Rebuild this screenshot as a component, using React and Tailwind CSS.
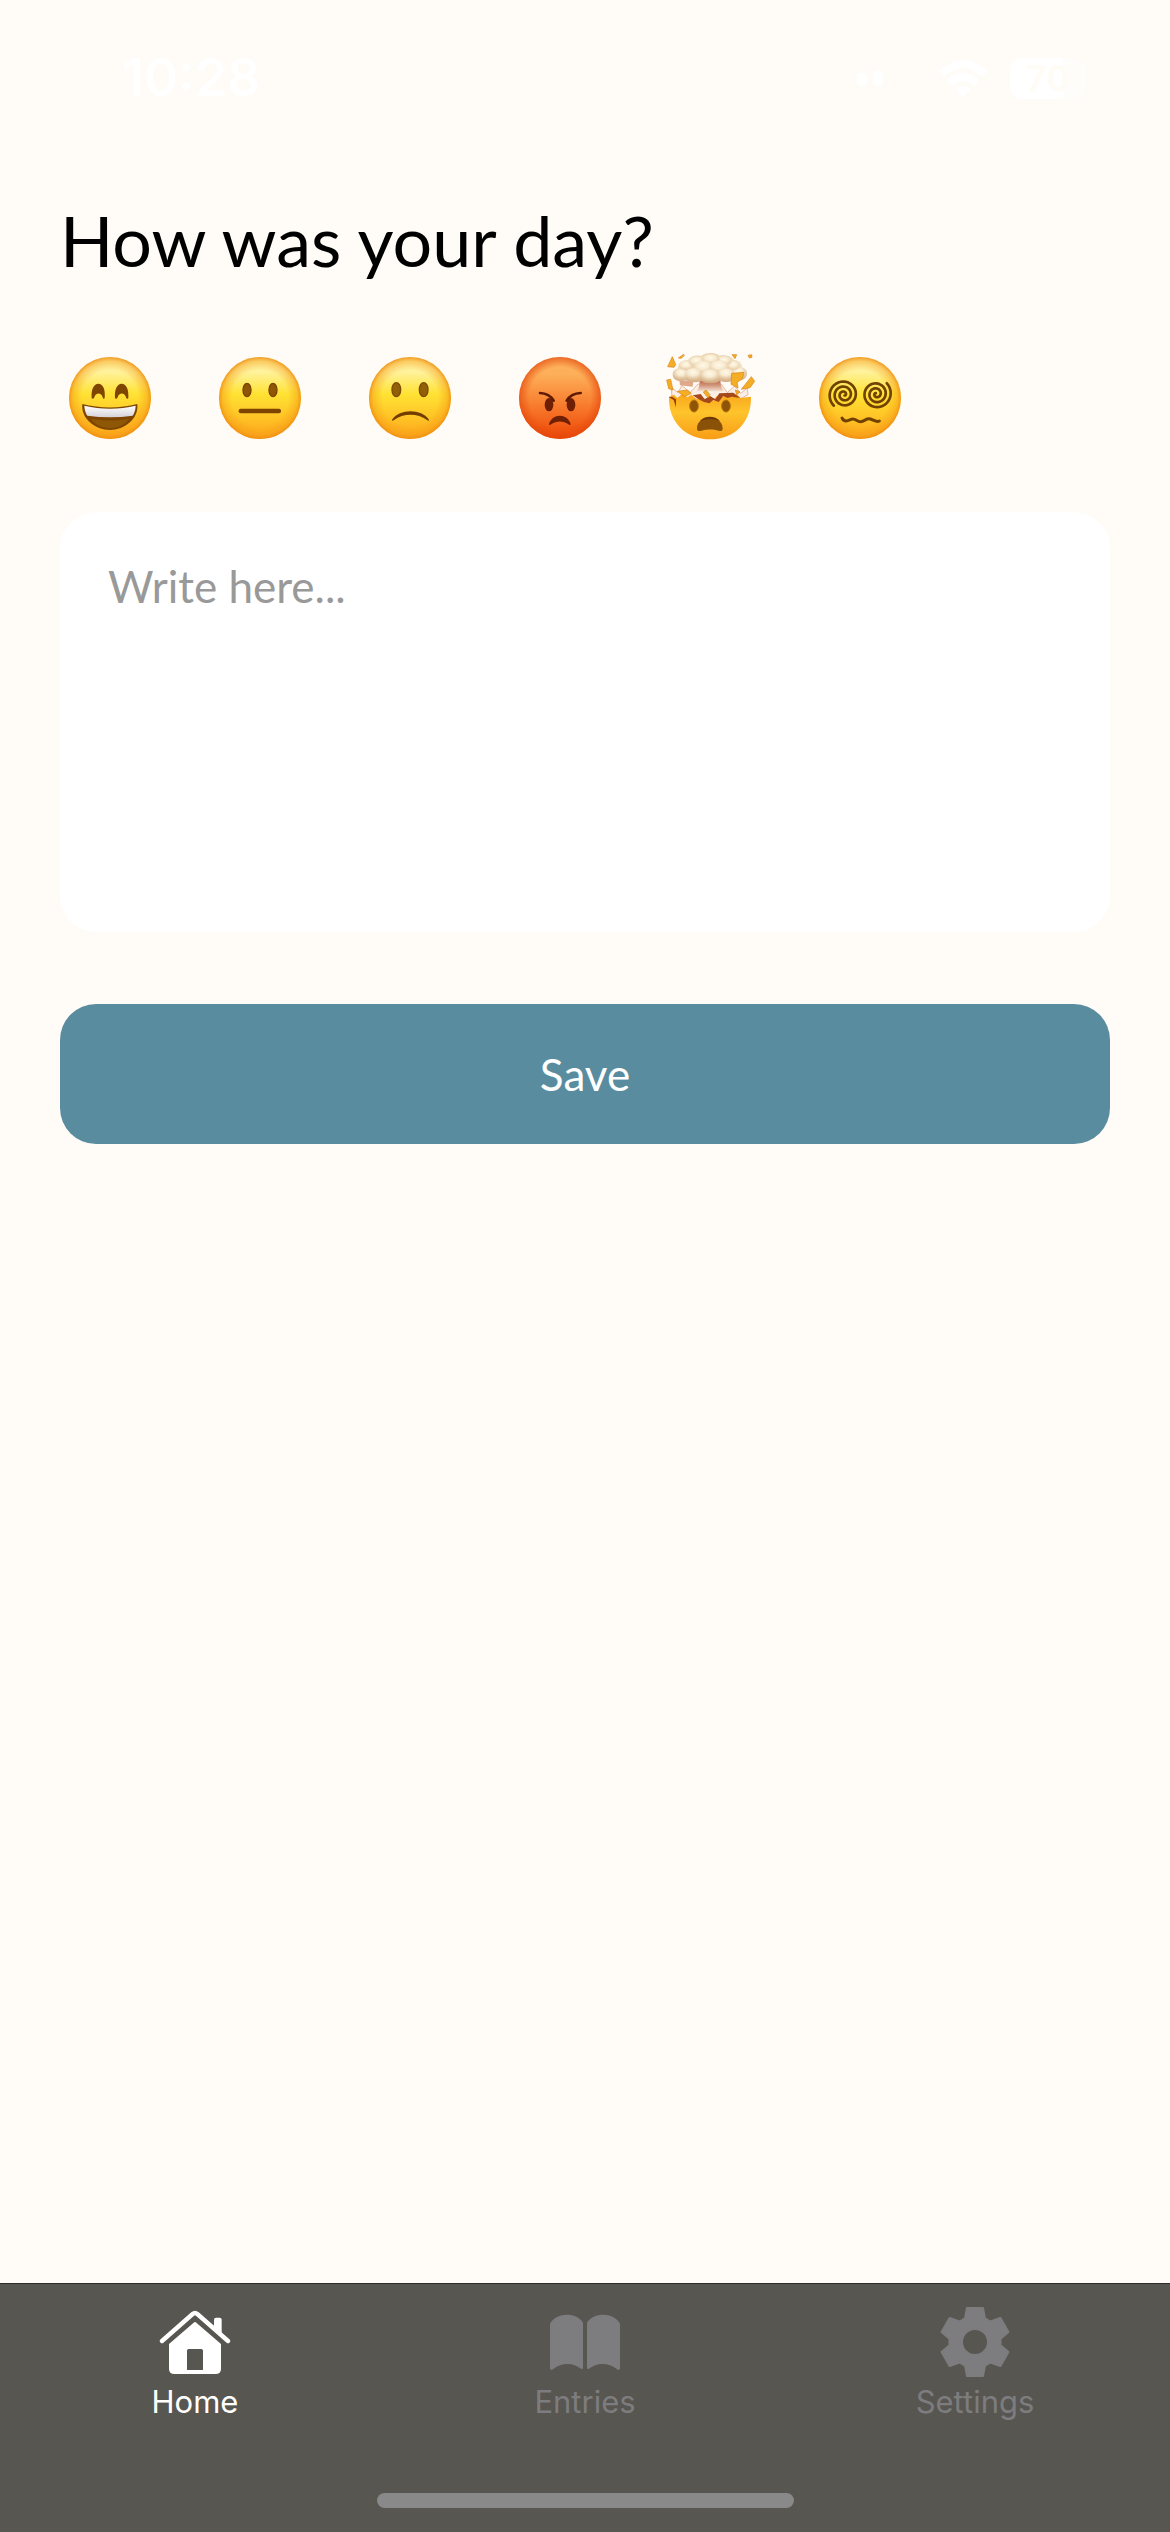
import React, { useState } from "react";

const spiral = (cx, cy, startDeg, turns, radius) => {
  const points = [];
  const steps = 90;
  for (let i = 0; i <= steps; i++) {
    const t = i / steps;
    const a = ((startDeg + t * turns * 360) * Math.PI) / 180;
    const r = radius * (1 - t) + 3 * t;
    points.push(`${(cx + r * Math.cos(a)).toFixed(1)},${(cy + r * Math.sin(a)).toFixed(1)}`);
  }
  return points.join(" ");
};

const gearOutline = () => {
  const tooth = [
    [-30, -71],
    [-24, -102],
    [24, -102],
    [30, -71],
  ];
  const points = [];
  for (let i = 0; i < 6; i++) {
    const a = (i * Math.PI) / 3;
    for (const [x, y] of tooth) {
      points.push(
        `${(x * Math.cos(a) - y * Math.sin(a)).toFixed(1)} ${(x * Math.sin(a) + y * Math.cos(a)).toFixed(1)}`
      );
    }
  }
  return `M${points.join("L")}Z M39 0A39 39 0 1 0 -39 0A39 39 0 1 0 39 0Z`;
};

function Gradients() {
  return (
    <svg className="absolute size-0" aria-hidden="true">
      <defs>
        <linearGradient id="face" x1="0" y1="0" x2="0" y2="1">
          <stop offset="0" stopColor="#fff3a0" />
          <stop offset="0.18" stopColor="#fff29c" />
          <stop offset="0.45" stopColor="#ffe234" />
          <stop offset="0.75" stopColor="#ffc225" />
          <stop offset="1" stopColor="#fca51b" />
        </linearGradient>
        <radialGradient id="rim" cx="0.5" cy="0.5" r="0.5">
          <stop offset="0.68" stopColor="#f59a16" stopOpacity="0" />
          <stop offset="0.9" stopColor="#f59a16" stopOpacity="0.45" />
          <stop offset="1" stopColor="#ee8b10" stopOpacity="0.85" />
        </radialGradient>
        <linearGradient id="angry" x1="0" y1="0" x2="0" y2="1">
          <stop offset="0" stopColor="#fdb662" />
          <stop offset="0.22" stopColor="#fdae58" />
          <stop offset="0.6" stopColor="#f87a2c" />
          <stop offset="1" stopColor="#ec4606" />
        </linearGradient>
        <radialGradient id="angryRim" cx="0.5" cy="0.5" r="0.5">
          <stop offset="0.75" stopColor="#e84d10" stopOpacity="0" />
          <stop offset="1" stopColor="#e2480c" stopOpacity="0.7" />
        </radialGradient>
        <linearGradient id="teeth" x1="0" y1="0" x2="0" y2="1">
          <stop offset="0" stopColor="#ffffff" />
          <stop offset="1" stopColor="#d5d3d8" />
        </linearGradient>
        <linearGradient id="brokenFace" x1="0" y1="0" x2="0" y2="1">
          <stop offset="0" stopColor="#f9a71c" />
          <stop offset="0.4" stopColor="#fec42c" />
          <stop offset="1" stopColor="#f89c16" />
        </linearGradient>
        <linearGradient id="cloud" x1="0" y1="0" x2="0" y2="1">
          <stop offset="0" stopColor="#e9d3ac" />
          <stop offset="0.4" stopColor="#f4e6cb" />
          <stop offset="1" stopColor="#d3ab84" />
        </linearGradient>
        <radialGradient id="puff" cx="0.48" cy="0.35" r="0.6">
          <stop offset="0" stopColor="#fff9e8" />
          <stop offset="0.5" stopColor="#f7ead0" />
          <stop offset="1" stopColor="#e2c69f" stopOpacity="0.6" />
        </radialGradient>
        <linearGradient id="stem" x1="0" y1="0" x2="0" y2="1">
          <stop offset="0" stopColor="#b9613f" />
          <stop offset="0.5" stopColor="#d0957a" />
          <stop offset="1" stopColor="#f6e2d2" />
        </linearGradient>
      </defs>
    </svg>
  );
}

function Head({ cx, fill = "url(#face)", rim = "url(#rim)" }) {
  return (
    <>
      <circle cx={cx} cy="174" r="123" fill={fill} />
      <circle cx={cx} cy="174" r="123" fill={rim} />
    </>
  );
}

function Happy() {
  return (
    <svg viewBox="30 24 300 300" className="size-full" aria-hidden="true">
      <Head cx="180" />
      <g fill="#7d4500">
        <path d="M125 174C123 147 132 131 145 131C158 131 167 147 164 174C163 178 159 177 158 172C154 157 137 157 133 172C131 177 126 178 125 174Z" />
        <path d="M195 174C193 147 202 131 215 131C228 131 237 147 235 174C234 178 229 177 228 172C224 157 207 157 203 172C201 177 196 178 195 174Z" />
        <path d="M97 192C150 206 210 206 262 192C267 235 225 270 180 270C135 270 92 235 97 192Z" />
      </g>
      <path d="M122 236C160 243 200 243 238 236C224 256 200 264 180 264C160 264 136 256 122 236Z" fill="#8d5705" />
      <path d="M103 197C152 209 208 209 257 197Q256 216 248 227Q180 236 112 227Q104 216 103 197Z" fill="url(#teeth)" />
    </svg>
  );
}

function Neutral() {
  return (
    <svg viewBox="480 24 300 300" className="size-full" aria-hidden="true">
      <Head cx="630" />
      <g fill="#8f5606" stroke="#7a4300" strokeWidth="4">
        <ellipse cx="591" cy="150" rx="12" ry="20" />
        <ellipse cx="669" cy="150" rx="12" ry="20" />
      </g>
      <rect x="566" y="206" width="127" height="14" rx="6" fill="#7d4500" />
    </svg>
  );
}

function Sad() {
  return (
    <svg viewBox="30 24 300 300" className="size-full" aria-hidden="true">
      <Head cx="180" />
      <g fill="#93600a" stroke="#7f4a02" strokeWidth="4">
        <ellipse cx="139" cy="149" rx="13" ry="21" />
        <ellipse cx="221" cy="149" rx="13" ry="21" />
      </g>
      <path d="M127 238C148 206 215 206 236 238C239 243 235 243 231 240C203 219 160 219 132 240C128 243 124 243 127 238Z" fill="#713d00" />
    </svg>
  );
}

function Angry() {
  return (
    <svg viewBox="480 24 300 300" className="size-full" aria-hidden="true">
      <Head cx="630" fill="url(#angry)" rim="url(#angryRim)" />
      <g fill="#6e1f04">
        <ellipse cx="597" cy="194" rx="13" ry="20" />
        <ellipse cx="663" cy="194" rx="13" ry="20" />
        <path d="M597 252C607 219 652 219 662 252C662 256 658 256 655 253C639 242 620 242 604 253C600 256 597 256 597 252Z" />
      </g>
      <g fill="none" stroke="#5f1a04" strokeWidth="8" strokeLinecap="round">
        <path d="M570 159Q598 160 611 182" />
        <path d="M692 159Q663 160 650 182" />
      </g>
    </svg>
  );
}

function MindBlown() {
  return (
    <svg viewBox="30 24 300 300" className="size-full" aria-hidden="true">
      <path d="M64 142L84 158L96 136L120 158L144 132L214 132L232 158L254 138L272 160L292 144L294 164L268 178L66 176Z" fill="#fbeee4" stroke="#d99a78" strokeWidth="2" />
      <path d="M88 120L130 124L128 140L90 136Z" fill="#e0a88a" />
      <path d="M148 118H212C210 136 216 144 222 154H140C148 142 150 134 148 118Z" fill="url(#stem)" />
      <path d="M57 170L72 164L82 174L96 162L112 172L124 164L140 178L152 170L164 186L176 176L190 182L200 168L212 176L228 162L244 172L260 162L272 174L303 170C305 245 255 298 180 298C108 298 54 245 57 170Z" fill="url(#brokenFace)" />
      <path d="M57 172L66 170L78 178V202L71 180Z" fill="#9a3d0d" />
      <path d="M128 166L152 162L164 178L180 168L196 178L208 160L250 158L270 174L246 170L232 174L220 168L206 186L190 180L178 190L162 186L150 180Z" fill="#a5481a" />
      <path d="M68 104C68 92 76 88 84 85C80 70 98 58 114 60C122 46 146 44 154 48C164 37 198 36 208 47C226 42 248 50 252 60C270 62 278 72 276 82C292 86 296 104 286 114C278 124 256 122 250 120C240 128 220 128 210 122C198 132 164 132 154 122C140 130 118 128 108 120C92 128 68 122 68 104Z" fill="url(#cloud)" />
      <g fill="url(#puff)">
        <ellipse cx="94" cy="102" rx="22" ry="16" />
        <ellipse cx="266" cy="98" rx="22" ry="17" />
        <ellipse cx="109" cy="77" rx="22" ry="14" />
        <ellipse cx="250" cy="77" rx="20" ry="14" />
        <ellipse cx="140" cy="65" rx="24" ry="15" />
        <ellipse cx="222" cy="63" rx="24" ry="14" />
        <ellipse cx="182" cy="58" rx="27" ry="15" />
        <ellipse cx="160" cy="82" rx="30" ry="20" />
        <ellipse cx="207" cy="81" rx="30" ry="20" />
        <ellipse cx="130" cy="102" rx="26" ry="18" />
        <ellipse cx="228" cy="102" rx="26" ry="17" />
        <ellipse cx="180" cy="106" rx="28" ry="18" />
      </g>
      <g fill="#f4ae25" stroke="#d98417" strokeWidth="2">
        <path d="M67 50L77 74L72 82L53 80Z" />
        <path d="M85 54L101 43L103 46L94 55Z" />
        <path d="M246 44L260 44L255 56Z" />
        <path d="M294 46L305 44L306 52L298 54Z" />
        <path d="M50 120L62 118L69 150L56 146Z" />
        <path d="M245 100L282 97L277 116L262 127L264 144L243 133Z" />
        <path d="M304 110L314 124L300 143L274 148Z" />
        <path d="M82 154L112 150L124 160L104 170Z" />
        <path d="M160 156L168 150L180 164L174 174Z" />
        <path d="M256 150L270 156L260 164Z" />
      </g>
      <g fill="#8e5507" stroke="#b87309" strokeWidth="3">
        <ellipse cx="132" cy="198" rx="13" ry="18" />
        <ellipse cx="228" cy="198" rx="13" ry="18" />
      </g>
      <path d="M141 266C140 221 218 221 218 266C218 273 212 274 206 272C190 267 170 267 154 272C147 274 141 273 141 266Z" fill="#8a5208" />
      <path d="M150 243C163 226 196 226 210 243Q180 232 150 243Z" fill="#6c3a02" />
    </svg>
  );
}

function Dizzy() {
  return (
    <svg viewBox="480 24 300 300" className="size-full" aria-hidden="true">
      <Head cx="630" />
      <g fill="none" stroke="#704100" strokeWidth="8" strokeLinecap="round" strokeLinejoin="round">
        <polyline points={spiral(582, 164, 133, 2.8, 45)} />
        <polyline points={spiral(679, 162, -46, 2.8, 45)} />
        <path d="M576 234C583 248 594 242 603 238C616 232 620 246 632 245C644 244 649 234 661 237C671 240 679 248 688 243" strokeWidth="9" />
      </g>
    </svg>
  );
}

function HomeIcon() {
  return (
    <svg viewBox="180 105 216 216" className="size-[72px]" fill="currentColor" aria-hidden="true">
      <path d="M345 176V146Q345 140 351 140H362Q368 140 368 146V196Z" />
      <path d="M189 210L281 129Q288 123 295 129L387 210" fill="none" stroke="currentColor" strokeWidth="13" strokeLinecap="round" strokeLinejoin="round" />
      <path
        fillRule="evenodd"
        d="M284 155Q288 151 292 155L366 219V293Q366 309 350 309H226Q210 309 210 293V219ZM269 234Q264 234 264 239V297H312V239Q312 234 307 234Z"
      />
    </svg>
  );
}

function EntriesIcon() {
  return (
    <svg viewBox="210 105 216 216" className="size-[72px]" fill="currentColor" aria-hidden="true">
      <path d="M213 158C232 123 292 123 312 155V290Q312 296 306 293C282 274 248 274 223 294Q213 300 213 292Z" />
      <path d="M324 155C344 123 404 123 423 158V292Q423 300 413 294C388 274 354 274 330 293Q324 296 324 290Z" />
    </svg>
  );
}

function SettingsIcon() {
  return (
    <svg viewBox="-108 -108 216 216" className="size-[72px]" aria-hidden="true">
      <path d={gearOutline()} fill="currentColor" fillRule="evenodd" stroke="currentColor" strokeWidth="6" strokeLinejoin="round" />
    </svg>
  );
}

function StatusBar() {
  return (
    <header className="flex h-[156px] items-center justify-between pr-[84px] pl-[122px] text-white">
      <time className="text-[52px] leading-[60px] font-semibold">10:28</time>
      <div className="flex items-center">
        <svg viewBox="0 0 26 16" className="mr-[55px] h-4 w-[26px]" fill="currentColor" aria-hidden="true">
          <rect x="0" y="3" width="10" height="13" rx="4" />
          <rect x="16" y="0" width="10" height="16" rx="4" />
        </svg>
        <svg viewBox="0 0 50 37" className="mr-[22px] h-[37px] w-[50px]" aria-hidden="true">
          <path d="M3 14Q25 -6 47 14M11 23Q25 11 39 23" fill="none" stroke="currentColor" strokeWidth="8" />
          <path d="M17 29Q25 23 33 29L25 37Z" fill="currentColor" />
        </svg>
        <div className="flex h-[41px] w-[76px] items-center justify-center rounded-xl bg-linear-to-r from-white from-70% to-white/50 to-70% text-[36px] leading-none font-semibold text-[#fffbf5]">
          70
        </div>
      </div>
    </header>
  );
}

const moods = [
  { label: "Happy", Face: Happy },
  { label: "Neutral", Face: Neutral },
  { label: "Sad", Face: Sad },
  { label: "Angry", Face: Angry },
  { label: "Mind blown", Face: MindBlown },
  { label: "Dizzy", Face: Dizzy },
];

const tabs = [
  { label: "Home", Icon: HomeIcon, active: true },
  { label: "Entries", Icon: EntriesIcon, active: false },
  { label: "Settings", Icon: SettingsIcon, active: false },
];

export default function App() {
  const [entry, setEntry] = useState("");
  return (
    <div className="flex min-h-screen flex-col bg-[#fffbf6] font-['Inter',sans-serif]">
      <Gradients />
      <StatusBar />
      <main className="flex flex-1 flex-col px-[60px] pt-10 font-['Lato',sans-serif]">
        <h1 className="text-[70px] leading-[88px] font-normal text-black">
          <label htmlFor="entry">How was your day?</label>
        </h1>
        <div className="mt-16 flex gap-[50px]">
          {moods.map(({ label, Face }) => (
            <button key={label} type="button" aria-label={label} className="size-[100px]">
              <Face />
            </button>
          ))}
        </div>
        <textarea
          id="entry"
          value={entry}
          onChange={(e) => setEntry(e.target.value)}
          placeholder="Write here..."
          className="mt-16 h-[420px] w-full resize-none rounded-[36px] bg-white px-12 py-11 text-[44px] leading-[60px] font-normal text-black outline-none placeholder:text-[#999999]"
        />
        <button type="button" className="mt-[72px] h-[140px] w-full rounded-[36px] bg-[#5a8ca0] text-[44px] leading-[60px] font-normal text-white">
          Save
        </button>
      </main>
      <footer className="border-t border-[#2b2b2a] bg-[#585650]">
        <nav className="grid grid-cols-3 pt-[22px]">
          {tabs.map(({ label, Icon, active }) => (
            <a
              key={label}
              href={`#${label.toLowerCase()}`}
              aria-current={active ? "page" : undefined}
              className={`flex flex-col items-center gap-1 text-[31px] leading-[40px] font-normal ${active ? "text-white" : "text-[#7d7c7f]"}`}
            >
              <Icon />
              {label}
            </a>
          ))}
        </nav>
        <div className="mx-auto mt-[71px] mb-6 h-[15px] w-[417px] rounded-full bg-[#898989]" />
      </footer>
    </div>
  );
}
